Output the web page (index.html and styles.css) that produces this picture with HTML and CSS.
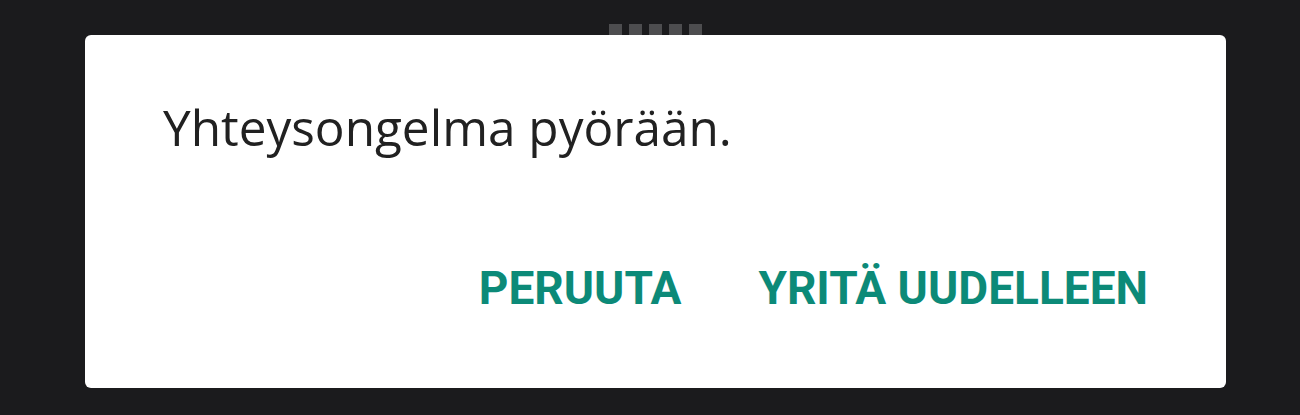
FILE: index.html
```html
<!DOCTYPE html>
<html lang="fi">
<head>
    <meta charset="UTF-8">
    <title>Yhteysongelma</title>
    <link rel="stylesheet" href="styles.css">
</head>
<body>
    <div class="screen">
        <div class="handle">
            <span></span><span></span><span></span><span></span><span></span>
        </div>
        <div class="dialog">
            <p class="message">Yhteysongelma pyörään.</p>
            <div class="actions">
                <button class="action">PERUUTA</button>
                <button class="action">YRITÄ UUDELLEEN</button>
            </div>
        </div>
    </div>
</body>
</html>
```

FILE: styles.css
```css
html, body {
    margin: 0;
    padding: 0;
    background: #1b1b1d;
}

.screen {
    width: 1300px;
    height: 415px;
    position: relative;
    padding-top: 35px;
    box-sizing: border-box;
}

/* the little grey squares peeking above the dialog */
.handle {
    position: absolute;
    top: 24px;
    left: 609px;
    display: flex;
    gap: 7px;
}

.handle span {
    width: 13px;
    height: 12px;
    background: #4d4d4f;
}

.dialog {
    position: relative;
    margin-left: 85px;
    width: 1141px;
    height: 353px;
    background: #ffffff;
    border-radius: 6px;
    display: flex;
    flex-direction: column;
    justify-content: space-between;
    box-sizing: border-box;
    padding: 0 78px 75px 78px;
}

.message {
    margin: 64px 0 0 0;
    font-family: "Open Sans", "Noto Sans", sans-serif;
    font-size: 49.5px;
    line-height: 56px;
    color: #212121;
}

.actions {
    display: flex;
    justify-content: flex-end;
    gap: 77px;
}

.action {
    background: none;
    border: none;
    padding: 0;
    font-family: Roboto, "Noto Sans", sans-serif;
    font-weight: 700;
    font-size: 46px;
    line-height: 50px;
    color: #0c8a78;
}
```
